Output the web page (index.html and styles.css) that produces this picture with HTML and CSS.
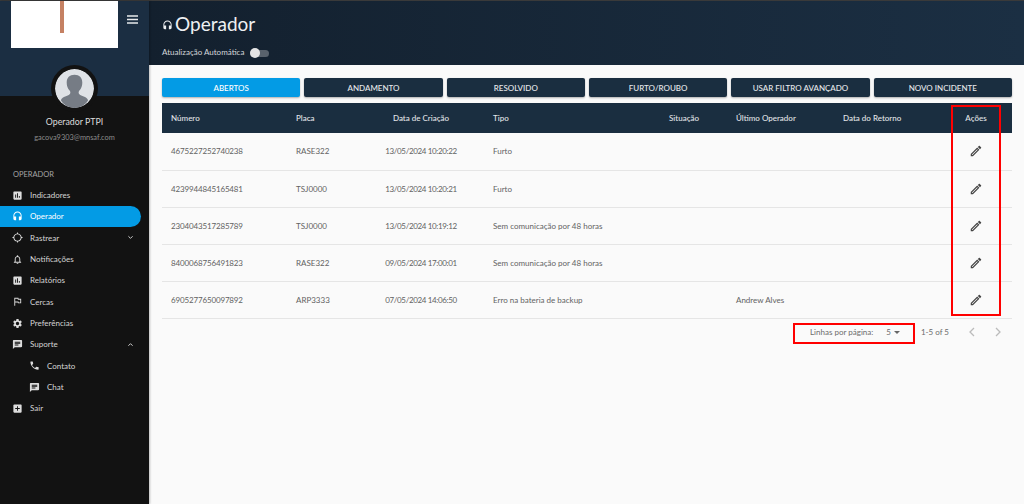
FILE: index.html
```html
<!DOCTYPE html>
<html lang="pt-BR">

<head>
    <meta charset="UTF-8">
    <meta name="viewport" content="width=device-width, initial-scale=1.0">
    <title>Operador</title>
    <link rel="stylesheet" href="styles.css">
</head>

<body>
    <svg class="sprite">
        <symbol id="i-chart" viewBox="0 0 24 24"><path d="M19 3H5c-1.100 0-2 .9-2 2v14c0 1.100.9 2 2 2h14c1.100 0 2-.9 2-2V5c0-1.100-.9-2-2-2zM9 17H7v-7h2v7zm4 0h-2V7h2v10zm4 0h-2v-4h2v4z" /></symbol>
        <symbol id="i-head" viewBox="0 0 24 24"><path d="M12 1c-5 0-9 4-9 9v7c0 1.660 1.340 3 3 3h3v-8H5v-2c0-3.870 3.130-7 7-7s7 3.130 7 7v2h-4v8h3c1.660 0 3-1.340 3-3v-7c0-5-4-9-9-9z" /></symbol>
        <symbol id="i-gps" viewBox="0 0 24 24"><path d="M20.940 11c-.46-4.170-3.770-7.480-7.940-7.940V1h-2v2.060C6.830 3.520 3.520 6.830 3.060 11H1v2h2.060c.46 4.170 3.770 7.480 7.940 7.940V23h2v-2.060c4.170-.46 7.480-3.770 7.940-7.940H23v-2h-2.060zM12 19c-3.870 0-7-3.130-7-7s3.130-7 7-7 7 3.130 7 7-3.130 7-7 7z" /></symbol>
        <symbol id="i-bell" viewBox="0 0 24 24"><path d="M12 22c1.100 0 2-.9 2-2h-4c0 1.100.9 2 2 2zm6-6v-5c0-3.070-1.630-5.640-4.500-6.320V4c0-.83-.67-1.500-1.500-1.500s-1.500.67-1.500 1.500v.68C7.640 5.360 6 7.920 6 11v5l-2 2v1h16v-1l-2-2zm-2 1H8v-6c0-2.480 1.510-4.500 4-4.500s4 2.020 4 4.500v6z" /></symbol>
        <symbol id="i-flag" viewBox="0 0 24 24"><path d="M12.360 6l.4 2H18v6h-3.360l-.4-2H7V6h5.360M14 4H5v17h2v-7h5.600l.4 2h7V6h-5.600L14 4z" /></symbol>
        <symbol id="i-gear" viewBox="0 0 24 24"><path d="M19.140 12.940c.04-.3.06-.61.06-.94 0-.32-.02-.64-.07-.94l2.030-1.580c.18-.14.23-.41.12-.61l-1.920-3.320c-.12-.22-.37-.29-.59-.22l-2.390.96c-.5-.38-1.030-.7-1.620-.94l-.36-2.540c-.04-.24-.24-.41-.48-.41h-3.840c-.24 0-.43.17-.47.41l-.36 2.540c-.59.24-1.130.57-1.620.94l-2.390-.96c-.22-.08-.47 0-.59.22L2.740 8.870c-.12.21-.08.47.12.61l2.030 1.580c-.05.3-.09.63-.09.94s.02.64.07.94l-2.030 1.580c-.18.14-.23.41-.12.61l1.920 3.320c.12.22.37.29.59.22l2.390-.96c.5.38 1.030.7 1.620.94l.36 2.540c.05.24.24.41.48.41h3.840c.24 0 .44-.17.47-.41l.36-2.540c.59-.24 1.130-.56 1.620-.94l2.390.96c.22.08.47 0 .59-.22l1.920-3.320c.12-.22.07-.47-.12-.61l-2.010-1.580zM12 15.600c-1.980 0-3.600-1.620-3.600-3.600s1.620-3.600 3.600-3.600 3.600 1.620 3.600 3.600-1.620 3.600-3.600 3.600z" /></symbol>
        <symbol id="i-chat" viewBox="0 0 24 24"><path d="M20 2H4c-1.100 0-1.990.9-1.990 2L2 22l4-4h14c1.100 0 2-.9 2-2V4c0-1.100-.9-2-2-2zM6 9h12v2H6V9zm8 5H6v-2h8v2zm4-6H6V6h12v2z" /></symbol>
        <symbol id="i-phone" viewBox="0 0 24 24"><path d="M6.620 10.790c1.440 2.830 3.760 5.140 6.590 6.590l2.200-2.200c.27-.27.67-.36 1.020-.24 1.120.37 2.330.57 3.570.57.55 0 1 .45 1 1V20c0 .55-.45 1-1 1-9.390 0-17-7.610-17-17 0-.55.45-1 1-1h3.500c.55 0 1 .45 1 1 0 1.250.2 2.450.57 3.570.11.35.03.74-.25 1.020l-2.200 2.200z" /></symbol>
        <symbol id="i-exit" viewBox="0 0 24 24"><path d="M19 3H5c-1.110 0-2 .9-2 2v14c0 1.100.89 2 2 2h14c1.100 0 2-.9 2-2V5c0-1.100-.9-2-2-2zm-2 10h-4v4h-2v-4H7v-2h4V7h2v4h4v2z" /></symbol>
        <symbol id="i-pen" viewBox="0 0 24 24"><path d="M14.060 9.020l.92.92L5.920 19H5v-.92l9.060-9.060M17.660 3c-.25 0-.51.1-.7.29l-1.830 1.830 3.750 3.750 1.830-1.830c.39-.39.39-1.020 0-1.410l-2.340-2.340c-.2-.2-.45-.29-.71-.29zm-3.600 3.190L3 17.250V21h3.750L17.810 9.940l-3.750-3.750z" /></symbol>
    </svg>

    <div class="app">
        <aside class="sidebar">
            <div class="side-top">
                <div class="logo"><span class="logo-bar"></span></div>
                <svg class="burger" viewBox="0 0 12 10"><path d="M0 1h11M0 4.500h11M0 8h11" /></svg>
            </div>
            <div class="avatar">
                <svg viewBox="0 0 40 40">
                    <circle cx="20" cy="20" r="20" fill="#dfe2e6" />
                    <path fill="#767c85" d="M20 6c-5 0-8 3-8 8 0 3 1 6 3 8 1 1 1 3 0 4-2 2-7 2-9 6 3 5 8 8 14 8s11-3 14-8c-2-4-7-4-9-6-1-1-1-3 0-4 2-2 3-5 3-8 0-5-3-8-8-8z" />
                </svg>
            </div>
            <div class="user-name">Operador PTPI</div>
            <div class="user-mail">gacova9303@mnsaf.com</div>

            <div class="menu-title">OPERADOR</div>
            <nav class="menu">
                <a class="item"><svg class="ico"><use href="#i-chart" /></svg>Indicadores</a>
                <a class="item active"><svg class="ico"><use href="#i-head" /></svg>Operador</a>
                <a class="item"><svg class="ico"><use href="#i-gps" /></svg>Rastrear<svg class="chev" viewBox="0 0 8 6"><path d="M1.500 1.500 4 4l2.500-2.500" /></svg></a>
                <a class="item"><svg class="ico"><use href="#i-bell" /></svg>Notificações</a>
                <a class="item"><svg class="ico"><use href="#i-chart" /></svg>Relatórios</a>
                <a class="item"><svg class="ico"><use href="#i-flag" /></svg>Cercas</a>
                <a class="item"><svg class="ico"><use href="#i-gear" /></svg>Preferências</a>
                <a class="item"><svg class="ico"><use href="#i-chat" /></svg>Suporte<svg class="chev" viewBox="0 0 8 6"><path d="M1.500 4.500 4 2l2.500 2.500" /></svg></a>
                <a class="item sub"><svg class="ico"><use href="#i-phone" /></svg>Contato</a>
                <a class="item sub"><svg class="ico"><use href="#i-chat" /></svg>Chat</a>
                <a class="item"><svg class="ico"><use href="#i-exit" /></svg>Sair</a>
            </nav>
        </aside>

        <main class="main">
            <header class="topbar">
                <h1><svg class="head-icon"><use href="#i-head" /></svg>Operador</h1>
                <div class="auto">
                    <span>Atualização Automática</span>
                    <span class="switch"><span class="knob"></span></span>
                </div>
            </header>

            <section class="content">
                <div class="filters">
                    <button class="btn on">ABERTOS</button>
                    <button class="btn">ANDAMENTO</button>
                    <button class="btn">RESOLVIDO</button>
                    <button class="btn">FURTO/ROUBO</button>
                    <button class="btn">USAR FILTRO AVANÇADO</button>
                    <button class="btn">NOVO INCIDENTE</button>
                </div>

                <table class="grid">
                    <colgroup>
                        <col class="c-num"><col class="c-placa"><col class="c-data"><col class="c-tipo"><col class="c-sit"><col class="c-ult"><col class="c-ret"><col class="c-acao">
                    </colgroup>
                    <thead>
                        <tr>
                            <th>Número</th><th>Placa</th><th class="mid">Data de Criação</th><th class="wide">Tipo</th><th>Situação</th><th>Último Operador</th><th>Data do Retorno</th><th class="mid">Ações</th>
                        </tr>
                    </thead>
                    <tbody>
                        <tr>
                            <td class="num">4675227252740238</td><td>RASE322</td><td class="mid date">13/05/2024 10:20:22</td><td class="wide">Furto</td><td></td><td></td><td></td>
                            <td class="mid"><svg class="pen"><use href="#i-pen" /></svg></td>
                        </tr>
                        <tr>
                            <td class="num">4239944845165481</td><td>TSJ0000</td><td class="mid date">13/05/2024 10:20:21</td><td class="wide">Furto</td><td></td><td></td><td></td>
                            <td class="mid"><svg class="pen"><use href="#i-pen" /></svg></td>
                        </tr>
                        <tr>
                            <td class="num">2304043517285789</td><td>TSJ0000</td><td class="mid date">13/05/2024 10:19:12</td><td class="wide">Sem comunicação por 48 horas</td><td></td><td></td><td></td>
                            <td class="mid"><svg class="pen"><use href="#i-pen" /></svg></td>
                        </tr>
                        <tr>
                            <td class="num">8400068756491823</td><td>RASE322</td><td class="mid date">09/05/2024 17:00:01</td><td class="wide">Sem comunicação por 48 horas</td><td></td><td></td><td></td>
                            <td class="mid"><svg class="pen"><use href="#i-pen" /></svg></td>
                        </tr>
                        <tr>
                            <td class="num">6905277650097892</td><td>ARP3333</td><td class="mid date">07/05/2024 14:06:50</td><td class="wide">Erro na bateria de backup</td><td></td><td>Andrew Alves</td><td></td>
                            <td class="mid"><svg class="pen"><use href="#i-pen" /></svg></td>
                        </tr>
                    </tbody>
                </table>

                <div class="pager">
                    <span class="rows-label">Linhas por página:</span>
                    <span class="rows-val">5</span>
                    <span class="caret"></span>
                    <span class="range">1-5 of 5</span>
                    <svg class="nav" viewBox="0 0 8 12"><path d="M6 2 2 6l4 4" /></svg>
                    <svg class="nav" viewBox="0 0 8 12"><path d="M2 2l4 4-4 4" /></svg>
                </div>
            </section>
        </main>
    </div>

    <!-- red marks drawn over the screenshot -->
    <div class="mark mark-acoes"></div>
    <div class="mark mark-linhas"></div>
</body>

</html>
```

FILE: styles.css
```css
* { box-sizing: border-box; }
html, body { height: 100%; }
body {
    margin: 0;
    height: 504px;
    overflow: hidden;
    position: relative;
    background-color: #fafafa;
    font-family: "Lato", "Open Sans", sans-serif;
    color: #555;
}

.sprite { display: none; }
.app { display: flex; height: 504px; border-top: 1px solid #3a3a3a; }

/* sidebar */
.sidebar {
    width: 149px;
    flex-shrink: 0;
    background: linear-gradient(to bottom, #1b2e42 95px, #121212 95px);
    color: #ddd;
    box-shadow: 1px 0 2px rgba(0, 0, 0, .25);
    z-index: 1;
}
.side-top { display: flex; align-items: flex-start; height: 64px; }
.logo { width: 107px; height: 47px; margin-left: 11px; background-color: #fff; display: flex; justify-content: center; }
.logo-bar { width: 4px; height: 32px; background-color: #c58163; margin-right: 5px; }
.burger { width: 12px; height: 10px; margin: 14px 0 0 9px; fill: none; stroke: #e8eaec; stroke-width: 1.400; }

.avatar { width: 47px; height: 47px; margin: 0 0 0 51px; background-color: #121212; border-radius: 50%; padding: 4px; }
.avatar svg { display: block; width: 39px; height: 39px; border-radius: 50%; }

.user-name { margin-top: 3px; text-align: center; font-size: 8.800px; line-height: 14px; color: #ddd; }
.user-mail { margin-top: 2px; text-align: center; font-size: 7.400px; line-height: 13px; color: #8c8c8c; }

.menu-title { margin: 25px 0 0 13px; font-size: 7.500px; line-height: 12px; color: #a5a5a5; }
.menu { margin-top: 3.500px; padding-right: 8px; }
.item {
    height: 21.330px;
    display: flex;
    align-items: center;
    padding-left: 12px;
    font-size: 8px;
    color: #d5d5d5;
}
.ico { width: 11px; height: 11px; margin-right: 7px; flex-shrink: 0; fill: #ddd; }
.item.sub { padding-left: 29px; }
.item.active { background-color: #039be5; color: #fff; border-radius: 0 12px 12px 0; }
.item.active .ico { fill: #fff; }
.chev { width: 7px; height: 5px; margin-left: auto; margin-right: 7px; fill: none; stroke: #ccc; stroke-width: 1.200; }

/* header */
.main { flex: 1; display: flex; flex-direction: column; min-width: 0; }
.topbar {
    height: 64px;
    padding: 7px 0 0 13px;
    background: linear-gradient(to right, #13202e, #1b2f43);
    color: #eef0f2;
}
h1 { display: flex; align-items: center; margin: 0; font-size: 19px; font-weight: 400; line-height: 32px; }
.head-icon { width: 11px; height: 11px; margin-right: 2px; margin-top: 3px; fill: #eef0f2; }
.auto { display: flex; align-items: center; margin-top: 7px; font-size: 8px; color: #d5d8db; }
.switch { position: relative; width: 19px; height: 7px; margin: 2px 0 0 6px; background-color: #59626c; border-radius: 4px; }
.knob { position: absolute; left: 0; top: -2px; width: 10px; height: 10px; border-radius: 50%; background-color: #e4e4e4; }

/* content */
.content { flex: 1; padding: 13px 12px 0 13px; }
.filters { display: grid; grid-template-columns: repeat(6, 1fr); gap: 4px; }
.btn {
    height: 19px;
    padding: 0;
    border: 0;
    border-radius: 2px;
    background-color: #1a2e40;
    color: #e8eaec;
    font-family: inherit;
    font-size: 8px;
    font-weight: 500;
    box-shadow: 0 1px 2px rgba(0, 0, 0, .3);
}
.btn.on { background-color: #039be5; color: #fff; }

.grid { width: 100%; margin-top: 6px; border-collapse: collapse; table-layout: fixed; font-size: 8px; }
.c-num { width: 125px; }
.c-placa { width: 80px; }
.c-data { width: 108px; }
.c-tipo { width: 185px; }
.c-sit { width: 67px; }
.c-ult { width: 107px; }
.c-ret { width: 106px; }
th {
    height: 30px;
    padding: 0 0 0 9px;
    background-color: #1a2e40;
    color: #e2e5e8;
    font-weight: 500;
    text-align: left;
}
td { height: 37px; padding: 0 0 0 9px; border-bottom: 1px solid #e5e5e5; color: #626262; }
th.mid, td.mid { padding: 0; text-align: center; }
th.wide, td.wide { padding-left: 18px; }
td.num { letter-spacing: -.15px; }
td.date { letter-spacing: -.35px; }
.pen { display: block; width: 14px; height: 14px; margin: 0 auto; fill: #444; }

.pager { display: flex; align-items: center; height: 27px; font-size: 8px; color: #6b6b6b; }
.rows-label { margin-left: 648px; }
.rows-val { margin-left: 13px; }
.caret { margin-left: 3px; border: 3px solid transparent; border-top: 3px solid #666; border-bottom: 0; }
.range { margin-left: 21px; }
.nav { width: 8px; height: 12px; margin-left: 18px; fill: none; stroke: #bbb; stroke-width: 1.300; }
.range + .nav { margin-left: 19px; }

/* red marks */
.mark { position: absolute; border: 2px solid #ff0000; }
.mark-acoes { left: 951px; top: 105px; width: 50px; height: 211px; }
.mark-linhas { left: 793px; top: 323px; width: 122px; height: 21px; }
```
